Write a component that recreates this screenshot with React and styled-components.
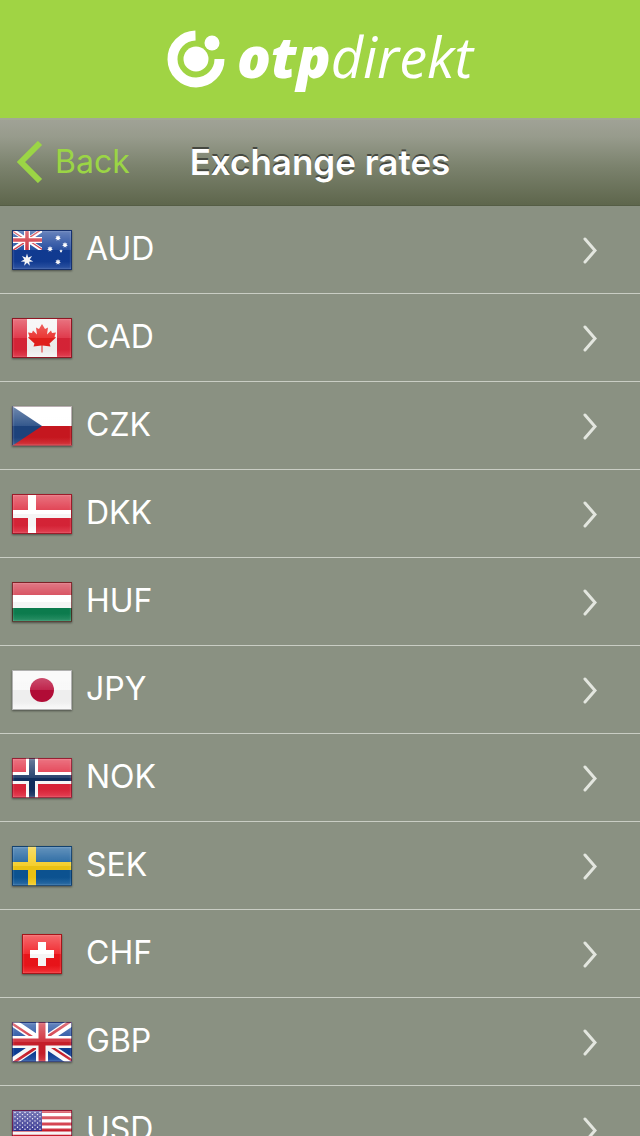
import React from 'react';
import styled, { createGlobalStyle } from 'styled-components';

const GlobalStyle = createGlobalStyle`
    body {
        margin: 0;
        background-color: #8a9182;
        font-family: Inter, "Liberation Sans", sans-serif;
    }
`;

const BrandBar = styled.header`
    display: flex;
    align-items: center;
    justify-content: center;
    gap: 12px;
    height: 118px;
    background-color: #a0d444;
    color: #ffffff;
`;

const BrandName = styled.span`
    padding-bottom: 6px;
    font-family: "Open Sans", "Noto Sans", sans-serif;
    font-size: 56px;
    line-height: 76px;
    font-style: italic;
    font-weight: 500;
`;

const BrandStrong = styled.b`
    font-weight: 800;
`;

const NavBar = styled.nav`
    display: grid;
    grid-template-columns: 1fr auto 1fr;
    align-items: center;
    box-sizing: border-box;
    height: 88px;
    padding: 0 16px 2px;
    border-top: 2px solid #a2a994;
    border-bottom: 1px solid #555d45;
    background: linear-gradient(#a0a296, #979b8c 20%, #7b826d 55%, #5e664c);
`;

const BackButton = styled.button`
    display: flex;
    align-items: center;
    justify-self: start;
    gap: 12px;
    padding: 0;
    border: 0;
    background: none;
    color: #9bd545;
    font-family: inherit;
    font-size: 32px;
    line-height: 40px;
    cursor: pointer;
`;

const Title = styled.h1`
    margin: 0;
    color: #ffffff;
    font-size: 35px;
    line-height: 40px;
    font-weight: 600;
    text-shadow: 0 -2px 0 #454840;
`;

const RateList = styled.ul`
    margin: 0;
    padding: 0;
    list-style: none;
`;

const RateLink = styled.a`
    display: flex;
    align-items: center;
    box-sizing: border-box;
    height: 88px;
    padding: 0 42px 0 12px;
    border-bottom: 1px solid #c9cdc4;
    color: #ffffff;
    text-decoration: none;
`;

const FlagSlot = styled.span`
    display: flex;
    justify-content: center;
    width: 60px;
    margin-right: 14px;
`;

const FlagFrame = styled.span`
    position: relative;
    width: ${props => props.$square ? '40px' : '60px'};
    height: 40px;
    box-shadow: 0 1px 2px rgba(0, 0, 0, 0.45);

    svg {
        display: block;
    }

    /* glass shine over the flag */
    &::after {
        content: '';
        position: absolute;
        inset: 0;
        border: 1px solid ${props => props.$edge};
        box-shadow: inset 0 0 2px rgba(255, 255, 255, 0.4);
        background: linear-gradient(
            rgba(255, 255, 255, 0.36),
            rgba(255, 255, 255, 0.1) 50%,
            rgba(0, 0, 0, 0.04) 50%,
            rgba(0, 0, 0, 0.04) 80%,
            rgba(255, 255, 255, 0.12) 100%
        );
    }
`;

const Code = styled.span`
    flex: 1;
    padding-bottom: 2px;
    font-size: 32px;
    line-height: 40px;
`;

const star = (cx, cy, r, inner, points) => {
    const out = [];
    for (let i = 0; i < points * 2; i++) {
        const radius = i % 2 ? inner : r;
        const angle = Math.PI * i / points - Math.PI / 2;
        out.push(`${cx + radius * Math.cos(angle)},${cy + radius * Math.sin(angle)}`);
    }
    return out.join(' ');
};

const UnionJack = () => (
    <>
        <path fill="#0c3f98" d="M0 0h60v40H0z" />
        <path stroke="#fff" strokeWidth="8" d="M0 0l60 40M60 0L0 40" />
        <path fill="#cc1f2c" d="M0 0l21 14h-4L0 3zM60 0L39 14h-5L55 0zM0 40l21-14h5L5 40zM60 40L39 26h4l17 11z" />
        <path stroke="#fff" strokeWidth="12" d="M30 0v40M0 20h60" />
        <path stroke="#cc1f2c" strokeWidth="7" d="M30 0v40M0 20h60" />
    </>
);

const usStars = [];
for (let row = 0; row < 9; row++) {
    for (let col = 0; col < (row % 2 ? 5 : 6); col++) {
        usStars.push([3 + col * 5 + (row % 2 ? 2.5 : 0), 2.5 + row * 2.1]);
    }
}

const flags = {
    AUD: (
        <>
            <path fill="#113c96" d="M0 0h60v40H0z" />
            <svg width="30" height="20" viewBox="0 0 60 40"><UnionJack /></svg>
            <g fill="#fff">
                <polygon points={star(15, 30, 6.5, 2.8, 7)} />
                <polygon points={star(46, 8, 3, 1.6, 7)} />
                <polygon points={star(38, 19, 3, 1.6, 7)} />
                <polygon points={star(53, 15, 3, 1.6, 7)} />
                <polygon points={star(49, 21, 1.8, 0.9, 5)} />
                <polygon points={star(46, 32, 3, 1.6, 7)} />
            </g>
        </>
    ),
    CAD: (
        <>
            <path fill="#f4f4f4" d="M0 0h60v40H0z" />
            <path fill="#dc2438" d="M0 0h15v40H0zM45 0h15v40H45z" />
            <path fill="#e8201c" d="M30 6l3 5 3-1.500-1 7 4-4 1 2.500 4-.5-1.500 4 1.500 1-6.500 6 1 3-8-1v7h-1v-7l-8 1 1-3-6.500-6 1.500-1L16 14.500l4 .5 1-2.500 4 4-1-7 3 1.500z" />
        </>
    ),
    CZK: (
        <>
            <path fill="#fff" d="M0 0h60v20H0z" />
            <path fill="#cd1820" d="M0 20h60v20H0z" />
            <path fill="#1d4580" d="M0 0l30 20L0 40z" />
        </>
    ),
    DKK: (
        <>
            <path fill="#dc2438" d="M0 0h60v40H0z" />
            <path stroke="#fff" strokeWidth="8" d="M20 0v40M0 20h60" />
        </>
    ),
    HUF: (
        <>
            <path fill="#fff" d="M0 0h60v40H0z" />
            <path fill="#cf2b3e" d="M0 0h60v13H0z" />
            <path fill="#0c8050" d="M0 26h60v14H0z" />
        </>
    ),
    JPY: (
        <>
            <path fill="#f8f8f8" d="M0 0h60v40H0z" />
            <circle cx="30" cy="20" r="12" fill="#b80c38" />
        </>
    ),
    NOK: (
        <>
            <path fill="#e0243a" d="M0 0h60v40H0z" />
            <path stroke="#fff" strokeWidth="12" d="M20 0v40M0 20h60" />
            <path stroke="#122f60" strokeWidth="6" d="M20 0v40M0 20h60" />
        </>
    ),
    SEK: (
        <>
            <path fill="#0c5596" d="M0 0h60v40H0z" />
            <path stroke="#f4c914" strokeWidth="8" d="M20 0v40M0 20h60" />
        </>
    ),
    CHF: (
        <>
            <path fill="#f0141a" d="M0 0h40v40H0z" />
            <path stroke="#fff" strokeWidth="8" d="M20 8v24M8 20h24" />
        </>
    ),
    GBP: <UnionJack />,
    USD: (
        <>
            <path fill="#fff" d="M0 0h60v40H0z" />
            <path stroke="#cc1c2c" strokeWidth="3" d="M0 1.500h60M0 7.700h60M0 13.900h60M0 20h60M0 26.200h60M0 32.300h60M0 38.500h60" />
            <path fill="#2a2a8c" d="M0 0h30v21H0z" />
            {usStars.map(([x, y]) => <circle key={`${x}-${y}`} cx={x} cy={y} r="0.7" fill="#fff" />)}
        </>
    ),
};

const rates = [
    { code: 'AUD', edge: '#16316f' },
    { code: 'CAD', edge: '#8f1724' },
    { code: 'CZK', edge: 'rgba(60, 30, 40, 0.35)' },
    { code: 'DKK', edge: '#9c1c2a' },
    { code: 'HUF', edge: 'rgba(90, 20, 20, 0.7)' },
    { code: 'JPY', edge: 'rgba(130, 130, 130, 0.6)' },
    { code: 'NOK', edge: 'rgba(120, 20, 40, 0.7)' },
    { code: 'SEK', edge: 'rgba(10, 50, 90, 0.7)' },
    { code: 'CHF', edge: '#a5161a', square: true },
    { code: 'GBP', edge: 'rgba(30, 35, 90, 0.6)' },
    { code: 'USD', edge: 'rgba(120, 10, 40, 0.7)' },
];

const Logo = () => (
    <svg width="58" height="58" viewBox="0 0 58 58" aria-hidden="true">
        <path d="M28.500 5.500A23.500 23.500 0 1 0 52.500 29" fill="none" stroke="#fff" strokeWidth="10" />
        <circle cx="29" cy="29" r="12.500" fill="#fff" />
        <circle cx="45" cy="13" r="7.500" fill="#fff" />
    </svg>
);

const Flag = ({ code, edge, square }) => (
    <FlagFrame $edge={edge} $square={square}>
        <svg width={square ? 40 : 60} height="40" aria-hidden="true">{flags[code]}</svg>
    </FlagFrame>
);

const RateRow = (props) => (
    <li>
        <RateLink href={`#${props.code}`}>
            <FlagSlot>
                <Flag {...props} />
            </FlagSlot>
            <Code>{props.code}</Code>
            <svg width="16" height="28" fill="none" stroke="#e3e6df" strokeWidth="3" strokeLinecap="round" aria-hidden="true">
                <path d="M3 3l10 11.500L3 26" />
            </svg>
        </RateLink>
    </li>
);

const App = () => (
    <>
        <GlobalStyle />
        <BrandBar>
            <Logo />
            <BrandName><BrandStrong>otp</BrandStrong>direkt</BrandName>
        </BrandBar>
        <NavBar>
            <BackButton type="button">
                <svg width="27" height="42" fill="none" stroke="#9bd545" strokeWidth="6" aria-hidden="true">
                    <path d="M24 2L5 21l19 19" />
                </svg>
                Back
            </BackButton>
            <Title>Exchange rates</Title>
        </NavBar>
        <main>
            <RateList>
                {rates.map(rate => <RateRow key={rate.code} {...rate} />)}
            </RateList>
        </main>
    </>
);

export default App;
